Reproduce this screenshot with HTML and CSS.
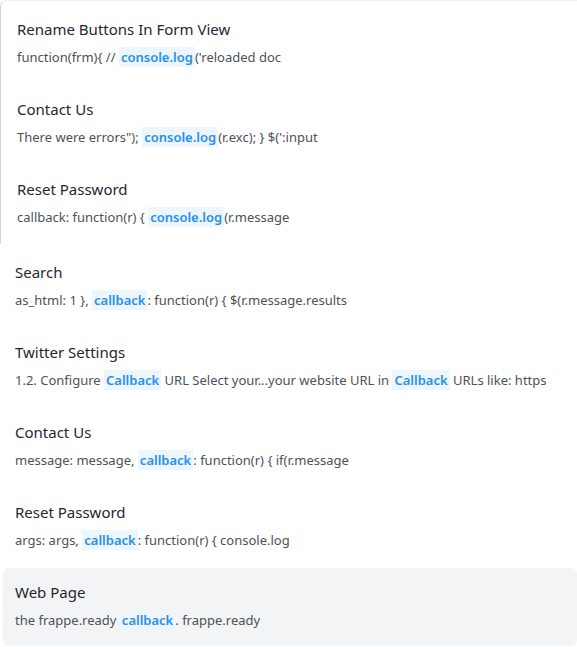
FILE: index.html
```html
<!DOCTYPE html>
<html>
<head>
<meta charset="utf-8">
<link rel="stylesheet" href="styles.css">
</head>
<body>
<div class="box">
  <div class="item">
    <div class="title">Rename Buttons In Form View</div>
    <div class="snippet">function(frm){ // <mark>console.log</mark>('reloaded doc</div>
  </div>
  <div class="item">
    <div class="title">Contact Us</div>
    <div class="snippet">There were errors"); <mark>console.log</mark>(r.exc); } $(':input</div>
  </div>
  <div class="item">
    <div class="title">Reset Password</div>
    <div class="snippet">callback: function(r) { <mark>console.log</mark>(r.message</div>
  </div>
</div>
<div class="list">
  <div class="item">
    <div class="title">Search</div>
    <div class="snippet">as_html: 1 }, <mark>callback</mark>: function(r) { $(r.message.results</div>
  </div>
  <div class="item">
    <div class="title">Twitter Settings</div>
    <div class="snippet">1.2. Configure <mark>Callback</mark> URL Select your...your website URL in <mark>Callback</mark> URLs like: https</div>
  </div>
  <div class="item">
    <div class="title">Contact Us</div>
    <div class="snippet">message: message, <mark>callback</mark>: function(r) { if(r.message</div>
  </div>
  <div class="item">
    <div class="title">Reset Password</div>
    <div class="snippet">args: args, <mark>callback</mark>: function(r) { console.log</div>
  </div>
  <div class="item active">
    <div class="title">Web Page</div>
    <div class="snippet">the frappe.ready <mark>callback</mark>. frappe.ready</div>
  </div>
</div>
</body>
</html>
```
FILE: styles.css
```css
html, body {
  margin: 0;
  padding: 0;
  background: #ffffff;
  overflow: hidden;
}
body {
  width: 577px;
  height: 647px;
  font-family: "Noto Sans", "Open Sans", sans-serif;
  color: #1f272e;
}
.box {
  border-left: 1px solid #d4d4d4;
  border-top: 1px solid #f0f0f0;
  border-top-left-radius: 7px;
  padding: 4px 0 0 4px;
  height: 239px;
}
.list {
  margin-top: 4px;
  padding-left: 3px;
}
.item {
  padding: 14px 12px 17px;
  height: 78px;
  box-sizing: border-box;
  margin-bottom: 2px;
  border-radius: 6px;
}
.item.active {
  background: #f3f4f6;
}
.title {
  font-size: 15px;
  line-height: 20px;
  font-weight: 400;
  color: #1f272e;
}
.snippet {
  margin-top: 9px;
  font-size: 13px;
  line-height: 18px;
  color: #4c5258;
  white-space: nowrap;
}
mark {
  background: #edf5fd;
  color: #2490ef;
  font-weight: 600;
  padding: 1px 2px;
}
```
